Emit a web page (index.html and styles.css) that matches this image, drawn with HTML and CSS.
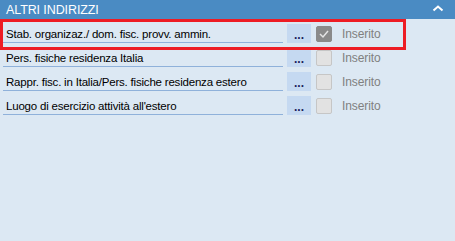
FILE: index.html
```html
<!DOCTYPE html>
<html lang="it">
<head>
  <meta charset="UTF-8" />
  <meta name="viewport" content="width=device-width, initial-scale=1.0"/>
  <title>Altri indirizzi</title>
  <link rel="stylesheet" href="styles.css">
</head>
<body>

  <div class="panel">
    <div class="header">
      <span class="title">ALTRI INDIRIZZI</span>
      <svg class="chevron" width="12" height="7" viewBox="0 0 12 7">
        <polyline points="1.5,5.5 6,1.5 10.5,5.5" fill="none" stroke="#fff" stroke-width="2"/>
      </svg>
    </div>

    <div class="rows">
      <div class="row">
        <div class="field">Stab. organizaz./ dom. fisc. provv. ammin.</div>
        <button class="dots">...</button>
        <span class="check checked">
          <svg width="12" height="10" viewBox="0 0 12 10">
            <polyline points="2,5 5,8 10,2" fill="none" stroke="#e4e4e4" stroke-width="1.5"/>
          </svg>
        </span>
        <span class="status">Inserito</span>
      </div>
      <div class="row">
        <div class="field">Pers. fisiche residenza Italia</div>
        <button class="dots">...</button>
        <span class="check"></span>
        <span class="status">Inserito</span>
      </div>
      <div class="row">
        <div class="field">Rappr. fisc. in Italia/Pers. fisiche residenza estero</div>
        <button class="dots">...</button>
        <span class="check"></span>
        <span class="status">Inserito</span>
      </div>
      <div class="row">
        <div class="field">Luogo di esercizio attività all'estero</div>
        <button class="dots">...</button>
        <span class="check"></span>
        <span class="status">Inserito</span>
      </div>
    </div>

    <!-- riquadro evidenziato -->
    <div class="highlight"></div>
  </div>

</body>
</html>
```

FILE: styles.css
```css
html, body {
  margin: 0;
  background-color: #dce8f3;
}

body {
  font-family: "Liberation Sans", Arial, sans-serif;
  font-size: 11.5px;
  letter-spacing: -0.2px;
  color: #000;
}

.panel {
  position: relative;
  height: 241px;
}

.header {
  height: 19px;
  background-color: #4a8bc3;
  color: #fff;
  display: flex;
  align-items: center;
  justify-content: space-between;
  padding: 0 11px 0 6px;
}

.title {
  font-size: 12.5px;
  letter-spacing: -0.1px;
}

.chevron {
  display: block;
  margin-top: -3px;
}

.row {
  height: 19px;
  padding: 5px 0 0 3px;
  display: flex;
  align-items: center;
}

.field {
  width: 277px;
  height: 18px;
  line-height: 20px;
  padding-left: 3px;
  border-bottom: 1px solid #8fb1da;
  white-space: nowrap;
  overflow: hidden;
}

.dots {
  margin-left: 4px;
  width: 24px;
  height: 19px;
  padding: 0;
  border: none;
  background-color: #c5d9f1;
  color: #1b1d5c;
  font-family: "Liberation Sans", Arial, sans-serif;
  font-size: 12px;
  font-weight: bold;
  letter-spacing: 0;
  line-height: 22px;
}

.check {
  margin-left: 5px;
  width: 14px;
  height: 14px;
  border: 1px solid #c6c6c6;
  border-radius: 2px;
  background-color: #e2e2e2;
  display: flex;
  align-items: center;
  justify-content: center;
}

.check.checked {
  background-color: #8a8a8a;
  border-color: #8a8a8a;
}

.status {
  margin-left: 10px;
  color: #808080;
  font-size: 12px;
  letter-spacing: -0.1px;
  line-height: 20px;
}

.highlight {
  position: absolute;
  top: 19px;
  left: 0;
  width: 406px;
  height: 31px;
  box-sizing: border-box;
  border: 3px solid #ed1c24;
}
```
